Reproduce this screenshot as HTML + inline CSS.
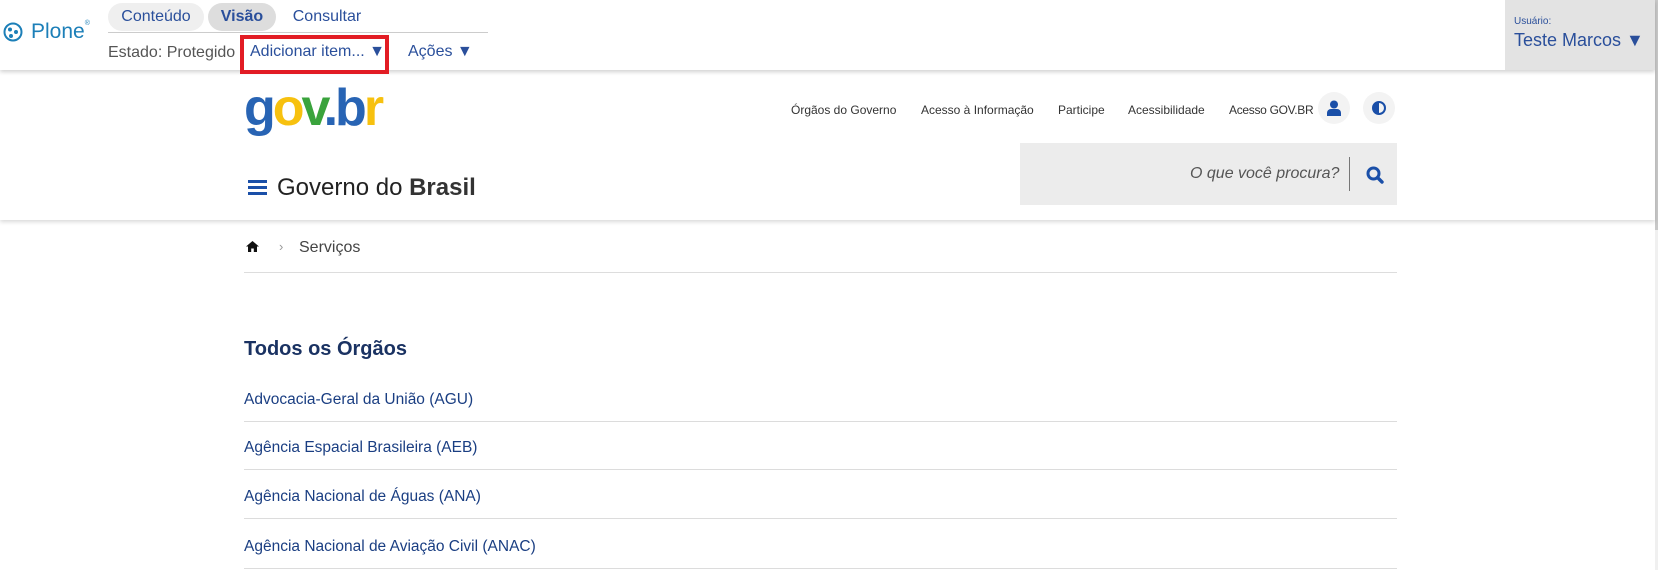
<!DOCTYPE html>
<html><head><meta charset="utf-8">
<style>
*{margin:0;padding:0;box-sizing:border-box}
body{width:1658px;height:570px;overflow:hidden;background:#fff;font-family:"Liberation Sans",Arial,sans-serif;position:relative}
.a{position:absolute;white-space:nowrap}
#tb{position:absolute;left:0;top:0;width:1655px;height:70px;background:#fff;box-shadow:0 2px 4px rgba(0,0,0,.18);z-index:3}
.pill{position:absolute;top:3px;height:28px;border-radius:14px;font-size:16px;line-height:28px;color:#2a4f9b;text-align:center}
#hdr{position:absolute;left:0;top:70px;width:1655px;height:150px;background:#fff;box-shadow:0 2px 4px rgba(0,0,0,.15);z-index:2}
.lnk{font-size:12px;color:#333;top:103px}
.item{position:absolute;left:244px;font-size:15.5px;color:#1a3e82}
.ln{position:absolute;left:244px;width:1153px;height:1px;background:#dcdcdc}
</style></head><body>
<div id="tb">
  <svg class="a" style="left:3px;top:22px" width="20" height="20" viewBox="0 0 20 20"><circle cx="10" cy="10" r="8.5" fill="none" stroke="#1c7fb8" stroke-width="2"/><circle cx="7" cy="7.5" r="2" fill="#1c7fb8"/><circle cx="13" cy="10" r="2" fill="#1c7fb8"/><circle cx="8" cy="14" r="2" fill="#1c7fb8"/></svg>
  <div class="a" style="left:31px;top:20px;font-size:21px;color:#1c7fb8">Plone<span style="font-size:7px;vertical-align:top">®</span></div>
  <div class="pill" style="left:108px;width:96px;background:#efefef">Conteúdo</div>
  <div class="pill" style="left:208px;width:68px;background:#ddd;font-weight:bold">Visão</div>
  <div class="pill" style="left:286px;width:82px">Consultar</div>
  <div class="a" style="left:108px;top:32px;width:380px;height:1px;background:#ccc"></div>
  <div class="a" style="left:108px;top:44px;font-size:16px;color:#555">Estado: Protegido</div>
  <div class="a" style="left:240px;top:35px;width:149px;height:39px;border:4px solid #e21c24"></div>
  <div class="a" style="left:250px;top:43px;font-size:16px;color:#2a4f9b">Adicionar item... ▼</div>
  <div class="a" style="left:408px;top:43px;font-size:16px;color:#2a4f9b">Ações ▼</div>
  <div class="a" style="left:1505px;top:0;width:150px;height:70px;background:#e3e3e3"></div>
  <div class="a" style="left:1514px;top:16px;font-size:10px;color:#2a4f9b">Usuário:</div>
  <div class="a" style="left:1514px;top:30px;font-size:18px;color:#2a4f9b">Teste Marcos ▼</div>
</div>
<div class="a" style="left:1655px;top:0;width:3px;height:570px;background:#f0f0f0"></div>
<div class="a" style="left:1655px;top:0;width:3px;height:230px;background:#c8c8c8"></div>
<div id="hdr">
  <div class="a" style="left:244px;top:7px;font-size:52px;font-weight:bold;letter-spacing:-3px;line-height:62px"><span style="color:#2864b4">g</span><span style="color:#f7c10f">o</span><span style="color:#3aa33c">v</span><span style="color:#2864b4">.b</span><span style="color:#f7c10f">r</span></div>
</div>
<div style="position:absolute;left:0;top:0;z-index:4">
  <div class="a lnk" style="left:791px">Órgãos do Governo</div>
  <div class="a lnk" style="left:921px">Acesso à Informação</div>
  <div class="a lnk" style="left:1058px">Participe</div>
  <div class="a lnk" style="left:1128px">Acessibilidade</div>
  <div class="a lnk" style="left:1229px;letter-spacing:-0.3px">Acesso GOV.BR</div>
  <div class="a" style="left:1318px;top:92px;width:32px;height:32px;border-radius:50%;background:#f3f3f3"></div>
  <svg class="a" style="left:1327px;top:100px" width="14" height="16" viewBox="0 0 14 16"><circle cx="7" cy="4.5" r="4" fill="#1a4fa8"/><path d="M0 16v-3a4 4 0 0 1 4-4h6a4 4 0 0 1 4 4v3z" fill="#1a4fa8"/></svg>
  <div class="a" style="left:1363px;top:92px;width:32px;height:32px;border-radius:50%;background:#f3f3f3"></div>
  <svg class="a" style="left:1372px;top:101px" width="14" height="14" viewBox="0 0 14 14"><circle cx="7" cy="7" r="6" fill="none" stroke="#1a4fa8" stroke-width="2"/><path d="M7 1a6 6 0 0 0 0 12z" fill="#1a4fa8"/></svg>
  <div class="a" style="left:1020px;top:143px;width:377px;height:62px;background:#ececec"></div>
  <div class="a" style="left:1190px;top:165px;font-size:16px;font-style:italic;color:#555">O que você procura?</div>
  <div class="a" style="left:1349px;top:157px;width:1px;height:34px;background:#777"></div>
  <svg class="a" style="left:1366px;top:166px" width="18" height="18" viewBox="0 0 18 18"><circle cx="7.5" cy="7.5" r="5.5" fill="none" stroke="#1a4fa8" stroke-width="3"/><path d="M11.5 11.5L16 16" stroke="#1a4fa8" stroke-width="3.4" stroke-linecap="round"/></svg>
  <div class="a" style="left:248px;top:180px;width:19px;height:3px;background:#1a4fa8;box-shadow:0 6px 0 #1a4fa8,0 12px 0 #1a4fa8"></div>
  <div class="a" style="left:277px;top:174px;font-size:24px;color:#222">Governo do <span style="font-weight:bold;color:#333">Brasil</span></div>
</div>
<svg class="a" style="left:246px;top:241px" width="13" height="11" viewBox="0 0 13 11"><path d="M6.5 0L0 5.5h2V11h3.2V7.5h2.6V11H11V5.5h2z" fill="#111"/></svg>
<div class="a" style="left:279px;top:239px;font-size:13px;color:#999">›</div>
<div class="a" style="left:299px;top:239px;font-size:16px;color:#444">Serviços</div>
<div class="a" style="left:244px;top:272px;width:1153px;height:1px;background:#ddd"></div>
<div class="a" style="left:244px;top:338px;font-size:20px;font-weight:bold;color:#1a3262">Todos os Órgãos</div>
<div class="item" style="top:391px">Advocacia-Geral da União (AGU)</div>
<div class="ln" style="top:421px"></div>
<div class="item" style="top:439px">Agência Espacial Brasileira (AEB)</div>
<div class="ln" style="top:469px"></div>
<div class="item" style="top:488px">Agência Nacional de Águas (ANA)</div>
<div class="ln" style="top:518px"></div>
<div class="item" style="top:538px">Agência Nacional de Aviação Civil (ANAC)</div>
<div class="ln" style="top:568px"></div>
</body></html>
